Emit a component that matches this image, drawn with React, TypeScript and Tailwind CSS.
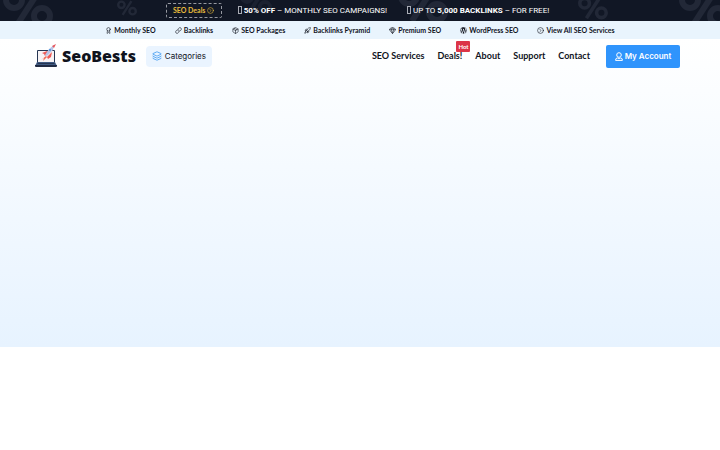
import React from "react";
import { Award, Link, Package, Rocket, Gem, CircleChevronRight, Layers, UserRound } from "lucide-react";
import { FaWordpress } from "react-icons/fa";

const services = [
  { label: "Monthly SEO", icon: Award },
  { label: "Backlinks", icon: Link },
  { label: "SEO Packages", icon: Package },
  { label: "Backlinks Pyramid", icon: Rocket },
  { label: "Premium SEO", icon: Gem },
  { label: "WordPress SEO", icon: FaWordpress },
  { label: "View All SEO Services", icon: CircleChevronRight },
];

function Percent({ className }: { className: string }) {
  return (
    <svg viewBox="0 0 50 40" fill="none" stroke="currentColor" strokeWidth="6" className={className} aria-hidden="true">
      <circle cx="11" cy="12" r="8" />
      <circle cx="39" cy="28" r="8" />
      <path d="M36 3 14 37" />
    </svg>
  );
}

function MissingGlyph() {
  return <span className="mr-0.5 inline-block h-2 w-1 border border-[#a9acb5] align-middle" />;
}

function UserIcon() {
  return (
    <svg viewBox="0 0 8 9" fill="none" stroke="currentColor" className="h-[9px] w-2" aria-hidden="true">
      <circle cx="4" cy="3" r="2.3" />
      <path d="M.6 8.4V8q0-2 1.8-2l1.6.5L5.600 6q1.800 0 1.800 2v.4z" />
    </svg>
  );
}

function Logo() {
  return (
    <svg viewBox="0 0 22 24" className="h-6 w-[22px]" aria-hidden="true">
      <rect x="2" y="6" width="18" height="14" rx="1" fill="#263653" />
      <path d="M3 7h16v11H3z" fill="#f7f3f5" />
      <path d="M2 18h18l2 4H0z" fill="#405a82" />
      <path d="M3 19h16l1 1H2z" fill="#263653" />
      <path d="M0 21h22v1q0 1-1 1H1q-1 0-1-1z" fill="#202a43" />
      <path d="m7 9 5-2 2 1-4 4-1-2z" fill="#ed5a57" />
      <path d="m12 13 5-5-1 5-3 2z" fill="#ed5a57" />
      <path d="m10 11 4-6 5-4-1 5-6 6z" fill="#b8c4e6" />
      <path d="m17 2 4-2-2 4z" fill="#e6555b" />
      <circle cx="15" cy="6" r="1" fill="#3d8ee0" />
      <path d="m6 16 5-4 1 1-4 4 1-3z" fill="#f06b56" />
    </svg>
  );
}

export default function App() {
  return (
    <div className="font-['Lato',sans-serif] text-[#10131d]">
      <div className="relative flex h-[21px] items-center justify-center overflow-hidden bg-[#111725] pr-[5px] text-[8px] text-white">
        <Percent className="absolute -top-3 left-0 h-10 w-14 text-[#222837]" />
        <Percent className="absolute top-0 left-[117px] h-4 w-5 text-[#222837]" />
        <Percent className="absolute -top-3 left-[240px] h-7 w-8 text-[#1b2130]" />
        <Percent className="absolute -top-4 left-[395px] h-10 w-14 text-[#222837]" />
        <Percent className="absolute -top-1 right-[111px] h-6 w-8 text-[#222837]" />
        <Percent className="absolute -top-3 -right-3 h-10 w-14 text-[#222837]" />
        <button type="button" className="relative mr-4 flex h-[15px] w-14 items-center justify-center gap-0.5 rounded-[2px] border border-dashed border-[#9699a1] text-[7px] font-bold text-[#e8bc3c]">
          SEO Deals <CircleChevronRight size={7} />
        </button>
        <p className="relative mr-5 font-['Roboto',sans-serif] whitespace-nowrap"><MissingGlyph /><b>50% OFF</b> – MONTHLY SEO CAMPAIGNS!</p>
        <p className="relative font-['Roboto',sans-serif] whitespace-nowrap"><MissingGlyph />UP TO <b>5,000 BACKLINKS</b> – FOR FREE!</p>
      </div>
      <nav aria-label="Services" className="flex h-[18px] items-center justify-center gap-[19px] bg-[#e9f4fd] text-[7px] font-bold">
        {services.map(({ label, icon: Icon }) => (
          <a key={label} href="#" className="flex items-center gap-0.5 whitespace-nowrap">
            <Icon size={7} />{label}
          </a>
        ))}
      </nav>
      <div className="h-[308px] bg-linear-to-b from-white to-[#e7f3ff]">
        <header className="flex h-[34px] items-center px-[35px] pr-10 font-['Inter',sans-serif]">
          <a href="#" className="flex items-center gap-[5px] font-['Open_Sans',sans-serif] text-[16px] font-extrabold">
            <Logo />SeoBests
          </a>
          <button type="button" className="ml-2.5 flex h-[21px] w-[66px] items-center justify-center gap-[3px] rounded bg-[#eaf4ff] text-[8px]">
            <Layers size={10} className="text-[#409af0]" />Categories
          </button>
          <nav aria-label="Main" className="ml-auto flex gap-[13px] font-['Lato',sans-serif] text-[9px] font-bold whitespace-nowrap">
            <a href="#">SEO Services</a>
            <a href="#" className="relative">
              Deals!
              <span className="absolute -top-2 left-[19px] flex h-[11px] w-3.5 items-center justify-center rounded-[1px] bg-[#dc3548] text-[6px] text-white">Hot</span>
            </a>
            <a href="#">About</a>
            <a href="#">Support</a>
            <a href="#">Contact</a>
          </nav>
          <button type="button" className="ml-4 flex h-[23px] w-[74px] items-center justify-center gap-0.5 rounded-[2px] bg-[#2f94fc] text-[8px] font-semibold text-white">
            <UserIcon />My Account
          </button>
        </header>
      </div>
    </div>
  );
}
